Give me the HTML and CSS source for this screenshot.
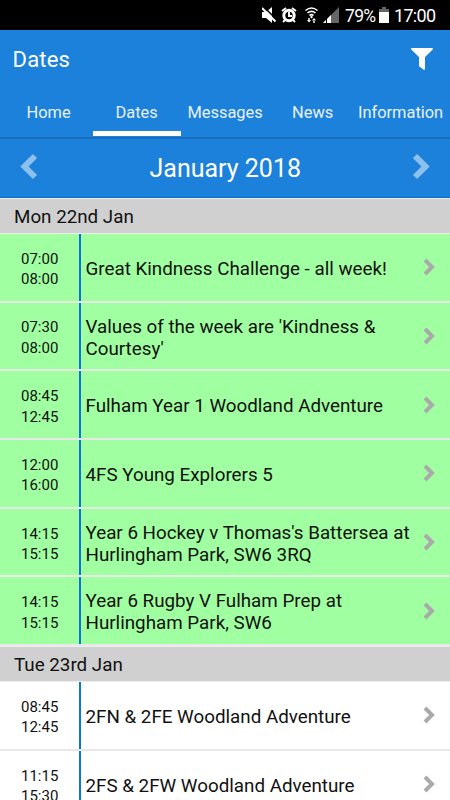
FILE: index.html
```html
<!DOCTYPE html>
<html lang="en">
<head>
<meta charset="utf-8">
<title>Dates</title>
<link rel="stylesheet" href="styles.css">
</head>
<body>
<svg class="defs" width="0" height="0"><defs><symbol id="chev" viewBox="0 0 12 18"><path d="M2 2 9 9 2 16" fill="none" stroke="currentColor" stroke-width="4"/></symbol></defs></svg>
<div class="status">
  <svg width="78" height="16" viewBox="0 0 78 16" fill="#fff">
    <path d="M0 5h4l6-5v16l-6-5H0z"/><path d="M1 -1 15 13" stroke="#000" stroke-width="1.5"/><path d="M0 1 13.5 14.5" stroke="#fff" stroke-width="2"/>
    <circle cx="27" cy="8.5" r="5.2" fill="none" stroke="#fff" stroke-width="3"/><path d="M27 5v4h3M20 4l4-3M30 1l4 3M23 13l-2 2M31 13l2 2" fill="none" stroke="#fff" stroke-width="1.9"/>
    <g fill="none" stroke="#fff" stroke-width="1.6"><path d="M43.5 3.5q6-5 12 0M45.5 6q4-3.4 8 0M47.5 8.5q2-1.7 4 0"/></g><circle cx="49.5" cy="10" r="1.2"/><path d="M45 13h4l-2 2.500zM46.300 11h1.400v3h-1.400zM50 13.500h4l-2-2.500zM51.300 13h1.400v3h-1.400z"/>
    <path d="M61 16 77 0v16z" fill="#666"/><path d="M61 16l8-8v8z"/><path d="M64.500 10v6" stroke="#000"/>
  </svg>
  <span class="pct">79%</span>
  <svg class="battery" width="10" height="16" viewBox="0 0 10 16"><path d="M3 0h4v2h3v3H0V2h3z" fill="#666"/><path d="M0 5h10v11H0z" fill="#fff"/></svg>
  <span class="clock">17:00</span>
</div>
<header class="bar">
  <h1>Dates</h1>
  <svg width="22" height="22" viewBox="0 0 22 22" fill="#fff"><path d="M.5 0h21q.8.900 0 1.800L14 9v12q-.5 1.400-1.600.600L8.400 18.500Q8 18 8 17.300V9L.5 1.800Q-.3.900.5 0z"/></svg>
</header>
<nav class="tabs">
  <span class="home">Home</span><span class="dates">Dates</span><span class="messages">Messages</span><span class="news">News</span><span class="info">Information</span>
</nav>
<div class="month">
  <svg class="prev" width="18" height="27"><use href="#chev"/></svg>
  <span>January 2018</span>
  <svg width="18" height="27"><use href="#chev"/></svg>
</div>
<main>
  <h2>Mon 22nd Jan</h2>
  <section class="green">
    <div class="row"><div class="time">07:00<br>08:00</div><div class="event">Great Kindness Challenge - all week!</div><svg width="12" height="18"><use href="#chev"/></svg></div>
    <div class="row"><div class="time">07:30<br>08:00</div><div class="event">Values of the week are 'Kindness &amp;<br>Courtesy'</div><svg width="12" height="18"><use href="#chev"/></svg></div>
    <div class="row"><div class="time">08:45<br>12:45</div><div class="event">Fulham Year 1 Woodland Adventure</div><svg width="12" height="18"><use href="#chev"/></svg></div>
    <div class="row"><div class="time">12:00<br>16:00</div><div class="event">4FS Young Explorers 5</div><svg width="12" height="18"><use href="#chev"/></svg></div>
    <div class="row"><div class="time">14:15<br>15:15</div><div class="event">Year 6 Hockey v Thomas's Battersea at<br>Hurlingham Park, SW6 3RQ</div><svg width="12" height="18"><use href="#chev"/></svg></div>
    <div class="row"><div class="time">14:15<br>15:15</div><div class="event">Year 6 Rugby V Fulham Prep at<br>Hurlingham Park, SW6</div><svg width="12" height="18"><use href="#chev"/></svg></div>
  </section>
  <h2>Tue 23rd Jan</h2>
  <section>
    <div class="row"><div class="time">08:45<br>12:45</div><div class="event">2FN &amp; 2FE Woodland Adventure</div><svg width="12" height="18"><use href="#chev"/></svg></div>
    <div class="row"><div class="time">11:15<br>15:30</div><div class="event">2FS &amp; 2FW Woodland Adventure</div><svg width="12" height="18"><use href="#chev"/></svg></div>
  </section>
</main>
</body>
</html>
```
FILE: styles.css
```css
* { box-sizing: border-box; }
html, body { margin: 0; height: 800px; overflow: hidden; }
body { width: 450px; background: #fff; color: #111; font-family: Roboto, "Liberation Sans", sans-serif; }
svg { display: block; flex: none; }
.defs { position: absolute; }
.status { height: 30px; background: #000; color: #fff; display: flex; align-items: center; padding-left: 262px; font-size: 18px; white-space: nowrap; }
.pct { width: 30px; margin: 1px 0 0 5px; font-size: 17.5px; letter-spacing: -.7px; }
.battery { margin-left: 4px; }
.clock { margin: 1px 0 0 5px; font-size: 18px; letter-spacing: -.7px; }
.bar { height: 58px; background: #1c81da; color: #fff; display: flex; align-items: center; justify-content: space-between; padding: 0 17px 0 12.5px; }
h1 { margin: 0; font-size: 22px; font-weight: 400; letter-spacing: .2px; }
.tabs { height: 51px; background: #1c81da; color: #e9f2fb; display: flex; border-bottom: 2px solid #176dba; font-size: 16.4px; white-space: nowrap; }
.tabs span { height: 48px; line-height: 49px; }
.home { width: 93px; padding-left: 26.5px; }
.dates { width: 88px; padding-left: 22.5px; border-bottom: 5px solid #fff; }
.messages { width: 105px; padding-left: 6.5px; }
.news { width: 72px; padding-left: 6px; }
.month { height: 59px; background: #1c81da; border-bottom: 1px solid #0a6cc5; color: #fff; display: flex; align-items: center; justify-content: space-between; padding: 0 19.5px 0 20px; font-size: 25px; }
.month svg { color: #8dc0ed; margin-bottom: 3px; }
.month .prev { transform: scaleX(-1); }
h2 { margin: 0; height: 36px; padding-left: 14px; border-top: 1px solid #eee; border-bottom: 1px solid #eee; background: #d0d0d0; font-size: 18.8px; font-weight: 400; line-height: 37px; }
.row { height: 68.7px; display: flex; align-items: center; border-bottom: 2px solid #e8e8e8; padding-right: 15.5px; }
.green .row { background: #a0ffa0; background-clip: padding-box; }
.time { width: 81px; align-self: stretch; border-right: 2px solid #0874dc; padding: 14.8px 0 0 21px; font-size: 15px; line-height: 20.4px; }
.event { flex: 1; padding: 3px 0 0 4.5px; font-size: 18.8px; line-height: 22px; white-space: nowrap; }
.row svg { color: #aaa; }
```
